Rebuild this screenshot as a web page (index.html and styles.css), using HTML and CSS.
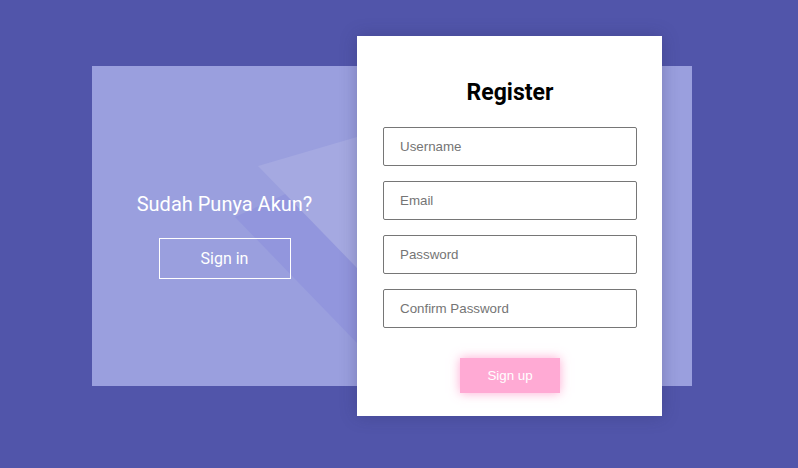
FILE: index.html
```html
<!DOCTYPE html>
<html lang="id">
<head>
<meta charset="utf-8">
<title>Register</title>
<link rel="stylesheet" href="styles.css">
</head>
<body>
<div class="stage">
  <div class="panel">
    <svg class="deco" width="600" height="320" viewBox="0 0 600 320" aria-hidden="true">
      <polygon points="143,151 200,125 265,125 265,277" fill="#9296dd"/>
      <polygon points="166,100 265,71 265,202" fill="#a5a9e1"/>
    </svg>
    <div class="side">
      <p class="side-title">Sudah Punya Akun?</p>
      <button class="btn-outline" type="button">Sign in</button>
    </div>
  </div>
  <form class="card">
    <h1 class="card-title">Register</h1>
    <input class="field" type="text" placeholder="Username">
    <input class="field" type="email" placeholder="Email">
    <input class="field" type="password" placeholder="Password">
    <input class="field" type="password" placeholder="Confirm Password">
    <button class="btn-primary" type="button">Sign up</button>
  </form>
</div>
</body>
</html>
```

FILE: styles.css
```css
* { box-sizing: border-box; }

html, body {
  margin: 0;
  padding: 0;
}

body {
  background: #5155aa;
  font-family: Roboto, "Liberation Sans", sans-serif;
  width: 798px;
  height: 468px;
  overflow: hidden;
}

.stage {
  display: grid;
  grid-template-columns: 265px 305px 30px;
  grid-template-rows: 30px 320px 30px;
  margin: 36px 0 0 92px;
  width: 600px;
}

.panel {
  grid-column: 1 / 4;
  grid-row: 2;
  background: #9a9fde;
  position: relative;
  overflow: hidden;
}

.deco {
  position: absolute;
  left: 0;
  top: 0;
}

.side {
  position: relative;
  width: 265px;
  padding-top: 126px;
  display: flex;
  flex-direction: column;
  align-items: center;
}

.side-title {
  margin: 0;
  color: #fff;
  font-size: 20px;
  line-height: 24px;
  font-weight: 400;
}

.btn-outline {
  margin-top: 22px;
  width: 132px;
  height: 41px;
  background: transparent;
  border: 1px solid #fff;
  color: #fff;
  font-family: Roboto, "Liberation Sans", sans-serif;
  font-size: 16px;
  padding: 0;
}

.card {
  grid-column: 2;
  grid-row: 1 / 4;
  background: #fff;
  box-shadow: 0 0 16px rgba(40, 40, 90, 0.3);
  padding: 43px 25px 0 26px;
  display: flex;
  flex-direction: column;
  align-items: stretch;
  z-index: 1;
}

.card-title {
  margin: 0 0 20px;
  text-align: center;
  font-size: 23px;
  line-height: 28px;
  font-weight: 700;
  color: #000;
}

.field {
  height: 39px;
  margin: 0 0 15px;
  border: 1px solid #767676;
  border-radius: 2px;
  padding: 0 16px;
  font-family: "Liberation Sans", Arial, sans-serif;
  font-size: 13.33px;
  color: #333;
  background: #fff;
}

.field::placeholder {
  color: #757575;
}

.btn-primary {
  align-self: center;
  margin-top: 15px;
  width: 100px;
  height: 35px;
  border: none;
  background: #ffaad4;
  color: #fff;
  font-family: "Liberation Sans", Arial, sans-serif;
  font-size: 13.33px;
  box-shadow: 0 0 10px rgba(255, 150, 200, 0.8);
  padding: 0;
}
```
